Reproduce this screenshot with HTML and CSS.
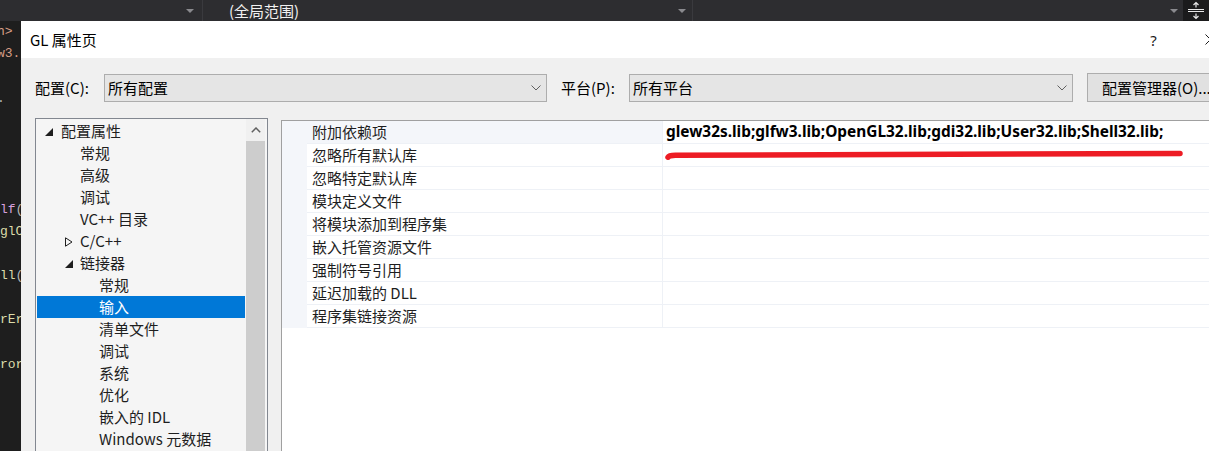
FILE: index.html
```html
<!DOCTYPE html>
<html lang="zh-CN">
<head>
<meta charset="utf-8">
<title>GL 属性页</title>
<link rel="stylesheet" href="styles.css">
</head>
<body>
<div class="screen">
  <div class="topbar">
    <div class="seg seg1"><span class="tri"></span></div>
    <div class="seg seg2"><span class="scope">(全局范围)</span><span class="tri"></span></div>
    <div class="seg seg3"><span class="tri"></span></div>
    <div class="split-btn">
      <svg width="26" height="21" viewBox="0 0 26 21">
        <path d="M5 9.5H21M5 11.5H21" stroke="#e8e8e8" stroke-width="1"/>
        <path d="M13 2.5V7.5M10.5 5L13 2.5L15.5 5" stroke="#e8e8e8" stroke-width="1.2" fill="none"/>
        <path d="M13 13.5V18.5M10.5 16L13 18.5L15.5 16" stroke="#e8e8e8" stroke-width="1.2" fill="none"/>
      </svg>
    </div>
  </div>
  <div class="main">
    <div class="editor">
      <div class="code-line"><span class="c-str ind3">h&gt;</span></div>
      <div class="code-line"><span class="c-str ind3">w3.</span></div>
      <div class="code-line"></div>
      <div class="code-line"><span class="c-grey ind3">.</span></div>
      <div class="code-line"></div>
      <div class="code-line"></div>
      <div class="code-line"></div>
      <div class="code-line"></div>
      <div class="code-line"><span class="c-kw">lf</span><span class="c-grey">(</span></div>
      <div class="code-line"><span class="c-fn">glC</span></div>
      <div class="code-line"></div>
      <div class="code-line"><span class="c-fn">ll</span><span class="c-grey">(</span></div>
      <div class="code-line"></div>
      <div class="code-line"><span class="c-fn">rEr</span></div>
      <div class="code-line"></div>
      <div class="code-line"><span class="c-fn">ror</span></div>
    </div>
    <div class="dialog">
      <div class="titlebar">
        <span class="title">GL 属性页</span>
        <span class="cap-btn help">?</span>
        <span class="cap-btn close">
          <svg width="11" height="11" viewBox="0 0 11 11"><path d="M0.5 0.5L10.5 10.5M10.5 0.5L0.5 10.5" stroke="#1a1a1a" stroke-width="1"/></svg>
        </span>
      </div>
      <div class="dlg-body">
        <div class="config-row">
          <span class="lbl lbl-config">配置(C):</span>
          <div class="combo combo-config">
            <span class="combo-text">所有配置</span>
            <svg class="chev" width="10" height="6" viewBox="0 0 10 6"><path d="M0.5 0.5L5 5L9.5 0.5" stroke="#606060" fill="none"/></svg>
          </div>
          <span class="lbl lbl-platform">平台(P):</span>
          <div class="combo combo-platform">
            <span class="combo-text">所有平台</span>
            <svg class="chev" width="10" height="6" viewBox="0 0 10 6"><path d="M0.5 0.5L5 5L9.5 0.5" stroke="#606060" fill="none"/></svg>
          </div>
          <button class="btn">配置管理器(O)...</button>
        </div>
        <div class="panels">
          <div class="tree">
            <div class="tree-rows">
              <div class="node l0"><span class="tog"><svg width="8" height="8" viewBox="0 0 8 8"><path d="M0 8H8V0Z" fill="#1e1e1e"/></svg></span>配置属性</div>
              <div class="node l1"><span class="tog"></span>常规</div>
              <div class="node l1"><span class="tog"></span>高级</div>
              <div class="node l1"><span class="tog"></span>调试</div>
              <div class="node l1"><span class="tog"></span>VC++ 目录</div>
              <div class="node l1"><span class="tog"><svg class="col" width="8" height="10" viewBox="0 0 8 10"><path d="M0.5 0.8L7 5L0.5 9.2Z" fill="none" stroke="#1e1e1e" stroke-width="1"/></svg></span>C/C++</div>
              <div class="node l1"><span class="tog"><svg width="8" height="8" viewBox="0 0 8 8"><path d="M0 8H8V0Z" fill="#1e1e1e"/></svg></span>链接器</div>
              <div class="node l2"><span class="tog"></span>常规</div>
              <div class="node l2 selected"><span class="tog"></span>输入</div>
              <div class="node l2"><span class="tog"></span>清单文件</div>
              <div class="node l2"><span class="tog"></span>调试</div>
              <div class="node l2"><span class="tog"></span>系统</div>
              <div class="node l2"><span class="tog"></span>优化</div>
              <div class="node l2"><span class="tog"></span>嵌入的 IDL</div>
              <div class="node l2"><span class="tog"></span>Windows 元数据</div>
              <div class="node l2"><span class="tog"></span>高级</div>
            </div>
            <div class="vscroll">
              <div class="sb-up"><svg width="10" height="6" viewBox="0 0 10 6"><path d="M0.8 5.2L5 1L9.2 5.2" stroke="#606060" stroke-width="1.5" fill="none"/></svg></div>
              <div class="sb-thumb"></div>
            </div>
          </div>
          <div class="grid">
            <div class="grid-body">
              <div class="gutter"></div>
              <div class="rows">
                <div class="row first"><div class="name">附加依赖项</div><div class="value">glew32s.lib;glfw3.lib;OpenGL32.lib;gdi32.lib;User32.lib;Shell32.lib;</div></div>
                <div class="row"><div class="name">忽略所有默认库</div><div class="value"></div></div>
                <div class="row"><div class="name">忽略特定默认库</div><div class="value"></div></div>
                <div class="row"><div class="name">模块定义文件</div><div class="value"></div></div>
                <div class="row"><div class="name">将模块添加到程序集</div><div class="value"></div></div>
                <div class="row"><div class="name">嵌入托管资源文件</div><div class="value"></div></div>
                <div class="row"><div class="name">强制符号引用</div><div class="value"></div></div>
                <div class="row"><div class="name">延迟加载的 DLL</div><div class="value"></div></div>
                <div class="row"><div class="name">程序集链接资源</div><div class="value"></div></div>
              </div>
            </div>
            <svg class="redline" width="530" height="16" viewBox="0 0 530 16">
              <path d="M6 10.2Q7 8.2 14 8.3L518 6.4" stroke="#ed1c24" stroke-width="5.5" stroke-linecap="round" fill="none"/>
            </svg>
          </div>
        </div>
      </div>
    </div>
  </div>
</div>
</body>
</html>
```
FILE: styles.css
```css
* { box-sizing: border-box; }

html, body {
  margin: 0;
  padding: 0;
}

body {
  width: 1209px;
  height: 451px;
  overflow: hidden;
  font-family: "Noto Sans CJK SC", "Noto Sans", sans-serif;
  font-size: 15px;
  color: #1e1e1e;
  background: #1e1e1e;
}

.screen {
  width: 1209px;
  height: 451px;
  overflow: hidden;
  display: flex;
  flex-direction: column;
}

/* ---------- top dark toolbar ---------- */
.topbar {
  flex: none;
  height: 21px;
  display: flex;
  background: #2d2d30;
}

.seg {
  flex: none;
  height: 21px;
  display: flex;
  align-items: center;
  justify-content: flex-end;
}

.seg1 {
  width: 203px;
  padding-right: 8px;
  border-right: 1px solid #3a3a3e;
}

.seg2 {
  width: 490px;
  padding-right: 6px;
  border-right: 1px solid #3a3a3e;
  justify-content: space-between;
  padding-left: 26px;
}

.seg3 {
  width: 490px;
  padding-right: 5px;
}

.tri {
  width: 0;
  height: 0;
  border-left: 4px solid transparent;
  border-right: 4px solid transparent;
  border-top: 4px solid #8a8a8e;
}

.scope {
  color: #f1f1f1;
  font-size: 15px;
  line-height: 21px;
}

.split-btn {
  flex: none;
  width: 26px;
  height: 21px;
  background: #1b1b1c;
  display: flex;
}

/* ---------- main area ---------- */
.main {
  flex: 1;
  display: flex;
  overflow: hidden;
}

.editor {
  flex: none;
  width: 21px;
  background: #1e1e1e;
  overflow: hidden;
  font-family: "Liberation Mono", monospace;
  font-size: 13px;
}

.code-line {
  height: 22.2px;
  line-height: 22.2px;
  white-space: nowrap;
  overflow: hidden;
}

.ind3 { margin-left: -3px; }
.c-str { color: #d69d85; }
.c-grey { color: #b4b4b4; }
.c-kw { color: #d8a0df; }
.c-fn { color: #dcdcaa; }

/* ---------- dialog ---------- */
.dialog {
  flex: none;
  width: 1212px;
  display: flex;
  flex-direction: column;
  background: #f0f0f0;
}

.titlebar {
  flex: none;
  height: 37px;
  background: #ffffff;
  display: flex;
  align-items: center;
  padding-left: 9px;
}

.title {
  color: #000;
  font-size: 15px;
  flex: 1;
}

.cap-btn {
  flex: none;
  width: 46px;
  height: 37px;
  display: flex;
  align-items: center;
  justify-content: center;
  color: #1a1a1a;
}

.help {
  font-size: 15px;
  font-family: "Noto Sans", sans-serif;
  padding-left: 3px;
}

.close {
  margin-left: 12px;
}

.dlg-body {
  flex: 1;
  padding: 15px 0 0 14px;
  display: flex;
  flex-direction: column;
}

.config-row {
  display: flex;
  align-items: center;
  height: 29px;
}

.lbl {
  color: #000;
  flex: none;
}

.lbl-config { width: 69px; }
.lbl-platform { width: 68px; margin-left: 14px; }

.combo {
  flex: none;
  height: 28px;
  border: 1px solid #adadad;
  background: #e5e5e5;
  display: flex;
  align-items: center;
  justify-content: space-between;
  padding: 0 5px 0 3px;
  color: #000;
}

.combo-config { width: 443px; }
.combo-platform { width: 444px; }

.chev { display: block; }

.btn {
  flex: none;
  margin-left: 14px;
  height: 29px;
  width: 150px;
  border: 1px solid #adadad;
  background: #e1e1e1;
  font-family: inherit;
  font-size: 15px;
  color: #000;
  text-align: left;
  padding: 0 0 0 14px;
}

.panels {
  margin-top: 16px;
  flex: 1;
  display: flex;
  align-items: flex-start;
}

/* ---------- tree ---------- */
.tree {
  flex: none;
  width: 233px;
  height: 360px;
  border: 1px solid #828790;
  background: #f5f5f5;
  display: flex;
  padding-right: 2px;
}

.tree-rows {
  flex: 1;
  padding: 1px 1px 0 1px;
}

.node {
  height: 22px;
  line-height: 22px;
  display: flex;
  align-items: center;
  white-space: nowrap;
  padding-left: 6px;
  color: #1e1e1e;
}

.node.l1 { padding-left: 25px; }
.node.l2 { padding-left: 44px; }

.node.selected {
  background: #0078d7;
  color: #ffffff;
}

.tog {
  flex: none;
  width: 18px;
  height: 22px;
  display: flex;
  align-items: center;
  padding-left: 2px;
  padding-top: 2px;
}

.tog svg { display: block; }
.l1 .tog { padding-left: 3px; }

.vscroll {
  flex: none;
  width: 19px;
  display: flex;
  flex-direction: column;
}

.sb-up {
  height: 22px;
  background: #f0f0f0;
  display: flex;
  justify-content: center;
  padding-top: 8px;
  padding-left: 1px;
}

.sb-up svg { display: block; }

.sb-thumb {
  flex: 1;
  background: #cdcdcd;
}

/* ---------- property grid ---------- */
.grid {
  position: relative;
  flex: 1;
  margin-left: 13px;
  margin-top: 2px;
  height: 360px;
  border-left: 1px solid #a0a0a0;
  border-top: 1px solid #a0a0a0;
  background: #ffffff;
}

.grid-body {
  display: flex;
}

.gutter {
  flex: none;
  width: 25px;
  background: #f4f6fa;
}

.rows {
  flex: 1;
}

.row {
  height: 23px;
  display: flex;
  border-bottom: 1px solid #eef1f6;
}

.name {
  flex: none;
  width: 356px;
  padding-left: 5px;
  line-height: 22px;
  border-right: 1px solid #eef1f6;
  color: #1e1e1e;
  white-space: nowrap;
}

.row.first .name {
  background: #f4f6fa;
}

.value {
  flex: 1;
  padding-left: 3px;
  line-height: 22px;
  font-family: "Noto Sans", sans-serif;
  font-weight: 700;
  font-size: 15.4px;
  color: #000;
  white-space: nowrap;
}

.redline {
  position: absolute;
  left: 380px;
  top: 26px;
}
```
